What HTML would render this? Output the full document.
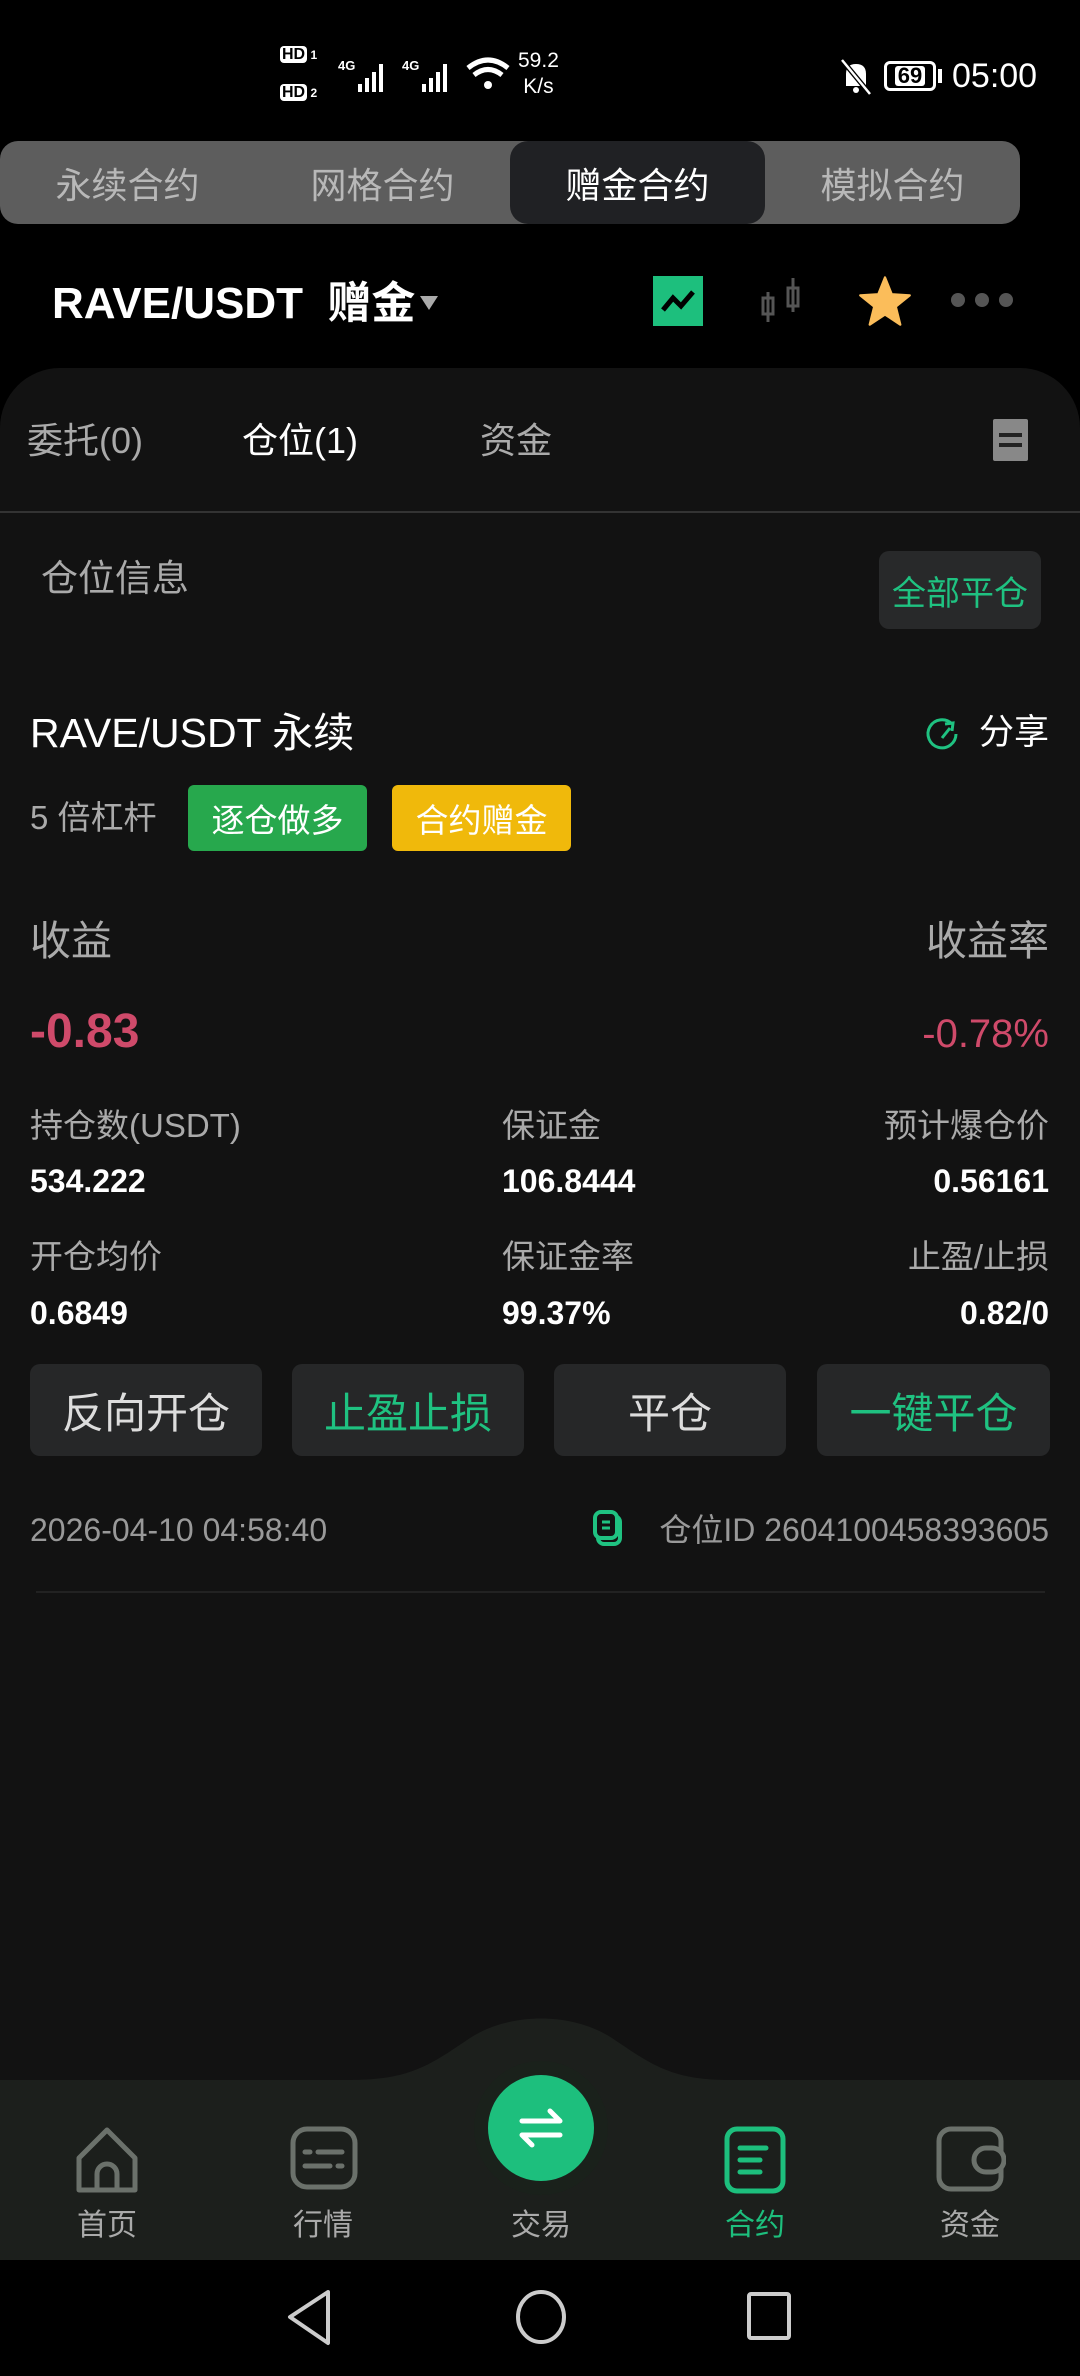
<!DOCTYPE html>
<html><head><meta charset="utf-8">
<style>
*{margin:0;padding:0;box-sizing:border-box}
body{width:1080px;height:2376px;background:#000;position:relative;overflow:hidden;font-family:"Liberation Sans","Noto Sans CJK SC",sans-serif;color:#fff}
.a{position:absolute;white-space:nowrap}
.c{display:flex;align-items:center;justify-content:center}
</style></head><body>
<!-- status bar -->
<div class="a" style="left:280px;top:46px;font-size:16px;font-weight:bold;line-height:18px">
<span style="background:#fff;color:#000;border-radius:4px;padding:0 2px">HD</span><span style="font-size:12px"> 1</span><br><br>
</div>
<div class="a" style="left:280px;top:84px;font-size:16px;font-weight:bold;line-height:18px"><span style="background:#fff;color:#000;border-radius:4px;padding:0 2px">HD</span><span style="font-size:12px"> 2</span></div>
<svg class="a" style="left:338px;top:54px" width="230" height="40" viewBox="0 0 230 40">
<text x="0" y="16" fill="#fff" font-size="13" font-weight="bold" font-family="Liberation Sans">4G</text>
<g fill="#fff"><rect x="20" y="30" width="4" height="8"/><rect x="27" y="24" width="4" height="14"/><rect x="34" y="18" width="4" height="20"/><rect x="41" y="10" width="4" height="28"/></g>
<text x="64" y="16" fill="#fff" font-size="13" font-weight="bold" font-family="Liberation Sans">4G</text>
<g fill="#fff"><rect x="84" y="30" width="4" height="8"/><rect x="91" y="24" width="4" height="14"/><rect x="98" y="18" width="4" height="20"/><rect x="105" y="10" width="4" height="28"/></g>
<path d="M130 14 Q150 -2 170 14" stroke="#fff" stroke-width="5" fill="none"/><path d="M136 21 Q150 10 164 21" stroke="#fff" stroke-width="5" fill="none"/><circle cx="150" cy="31" r="4" fill="#fff"/>
</svg>
<div class="a" style="left:518px;top:48px;font-size:21px;line-height:26px;text-align:center">59.2<br>K/s</div>
<svg class="a" style="left:836px;top:56px" width="40" height="40" viewBox="0 0 40 40"><path d="M10 30 V18 Q10 8 20 8 Q30 8 30 18 V30 Z" fill="#fff"/><circle cx="20" cy="34" r="3" fill="#fff"/><line x1="6" y1="4" x2="34" y2="38" stroke="#000" stroke-width="5"/><line x1="6" y1="4" x2="34" y2="38" stroke="#fff" stroke-width="2.5"/></svg>
<div class="a c" style="left:884px;top:61px;width:52px;height:30px;border:3px solid #fff;border-radius:6px;font-size:22px;font-weight:bold"><span style="background:#fff;color:#000;padding:0 3px;border-radius:3px;line-height:20px">69</span></div>
<div class="a" style="left:938px;top:69px;width:4px;height:14px;background:#fff"></div>
<div class="a" style="left:952px;top:56px;font-size:34px;line-height:40px">05:00</div>

<!-- segment tabs -->
<div class="a" style="left:0;top:141px;width:1020px;height:83px;background:#5d5d5d;border-radius:18px"></div>
<div class="a" style="left:510px;top:141px;width:255px;height:83px;background:#202124;border-radius:18px"></div>
<div class="a c" style="left:0;top:141px;width:255px;height:83px;font-size:36px;color:#b8b8b8">永续合约</div>
<div class="a c" style="left:255px;top:141px;width:255px;height:83px;font-size:36px;color:#b8b8b8">网格合约</div>
<div class="a c" style="left:510px;top:141px;width:255px;height:83px;font-size:36px;color:#fff">赠金合约</div>
<div class="a c" style="left:765px;top:141px;width:255px;height:83px;font-size:36px;color:#b8b8b8">模拟合约</div>

<!-- header -->
<div class="a" style="left:52px;top:276px;font-size:44px;font-weight:bold;line-height:56px">RAVE/USDT&nbsp; 赠金</div>
<div class="a" style="left:420px;top:296px;width:0;height:0;border-left:9px solid transparent;border-right:9px solid transparent;border-top:14px solid #aaa"></div>
<div class="a" style="left:653px;top:276px;width:50px;height:50px;background:#1dbf7d"></div>
<svg class="a" style="left:653px;top:276px" width="50" height="50"><path d="M10 34 L20 22 L28 30 L40 16" stroke="#000" stroke-width="5" fill="none"/></svg>
<svg class="a" style="left:758px;top:276px" width="50" height="50"><g stroke="#555" stroke-width="3" fill="none"><rect x="5" y="22" width="10" height="16"/><line x1="10" y1="16" x2="10" y2="46"/><rect x="30" y="12" width="10" height="18"/><line x1="35" y1="2" x2="35" y2="36"/></g></svg>
<svg class="a" style="left:858px;top:274px" width="54" height="54" viewBox="0 0 24 24"><path d="M12 1.5 L15 9 L23 9.5 L16.8 14.5 L18.8 22.5 L12 18 L5.2 22.5 L7.2 14.5 L1 9.5 L9 9 Z" fill="#fbbd5a" stroke="#fbbd5a" stroke-width="1" stroke-linejoin="round"/></svg>
<div class="a" style="left:951px;top:293px;width:14px;height:14px;border-radius:50%;background:#555;box-shadow:24px 0 0 #555,48px 0 0 #555"></div>

<!-- panel -->
<div class="a" style="left:0;top:368px;width:1080px;height:1760px;background:#121212;border-radius:60px 60px 0 0"></div>
<div class="a" style="left:27px;top:417px;font-size:36px;line-height:48px;color:#aaa">委托(0)</div>
<div class="a" style="left:242px;top:417px;font-size:36px;line-height:48px;color:#fff">仓位(1)</div>
<div class="a" style="left:480px;top:417px;font-size:36px;line-height:48px;color:#aaa">资金</div>
<div class="a" style="left:993px;top:419px;width:35px;height:42px;background:#888;border-radius:2px"></div>
<div class="a" style="left:999px;top:433px;width:23px;height:4px;background:#222;box-shadow:0 10px 0 #222"></div>
<div class="a" style="left:0;top:511px;width:1080px;height:2px;background:#333"></div>

<div class="a" style="left:41px;top:554px;font-size:37px;line-height:50px;color:#aaa">仓位信息</div>
<div class="a c" style="left:879px;top:551px;width:162px;height:78px;background:#28292a;border-radius:10px;font-size:34px;color:#1fc281">全部平仓</div>

<div class="a" style="left:30px;top:705px;font-size:41px;line-height:56px">RAVE/USDT 永续</div>
<svg class="a" style="left:922px;top:714px" width="40" height="40" viewBox="0 0 40 40"><path d="M30 10 A14 14 0 1 0 34 20" stroke="#1fc281" stroke-width="3" fill="none"/><path d="M23 10 L31 9 L30 17" stroke="#1fc281" stroke-width="3" fill="none"/><path d="M20 24 L28 14" stroke="#1fc281" stroke-width="3"/></svg>
<div class="a" style="left:979px;top:709px;font-size:35px;line-height:48px">分享</div>

<div class="a" style="left:30px;top:795px;font-size:33px;line-height:46px;color:#aaa">5 倍杠杆</div>
<div class="a c" style="left:188px;top:785px;width:179px;height:66px;background:#27a84d;border-radius:6px;font-size:33px">逐仓做多</div>
<div class="a c" style="left:392px;top:785px;width:179px;height:66px;background:#f0b90b;border-radius:6px;font-size:33px">合约赠金</div>

<div class="a" style="left:30px;top:914px;font-size:41px;line-height:54px;color:#aaa">收益</div>
<div class="a" style="right:31px;top:914px;font-size:41px;line-height:54px;color:#aaa">收益率</div>
<div class="a" style="left:30px;top:1002px;font-size:48px;font-weight:bold;line-height:60px;color:#cf4a6a">-0.83</div>
<div class="a" style="right:31px;top:1007px;font-size:40px;line-height:54px;color:#cf4a6a">-0.78%</div>

<div class="a" style="left:30px;top:1103px;font-size:33px;line-height:46px;color:#aaa">持仓数(USDT)</div>
<div class="a" style="left:502px;top:1103px;font-size:33px;line-height:46px;color:#aaa">保证金</div>
<div class="a" style="right:31px;top:1103px;font-size:33px;line-height:46px;color:#aaa">预计爆仓价</div>
<div class="a" style="left:30px;top:1160px;font-size:32px;font-weight:bold;line-height:42px">534.222</div>
<div class="a" style="left:502px;top:1160px;font-size:32px;font-weight:bold;line-height:42px">106.8444</div>
<div class="a" style="right:31px;top:1160px;font-size:32px;font-weight:bold;line-height:42px">0.56161</div>
<div class="a" style="left:30px;top:1234px;font-size:33px;line-height:46px;color:#aaa">开仓均价</div>
<div class="a" style="left:502px;top:1234px;font-size:33px;line-height:46px;color:#aaa">保证金率</div>
<div class="a" style="right:31px;top:1234px;font-size:33px;line-height:46px;color:#aaa">止盈/止损</div>
<div class="a" style="left:30px;top:1292px;font-size:32px;font-weight:bold;line-height:42px">0.6849</div>
<div class="a" style="left:502px;top:1292px;font-size:32px;font-weight:bold;line-height:42px">99.37%</div>
<div class="a" style="right:31px;top:1292px;font-size:32px;font-weight:bold;line-height:42px">0.82/0</div>

<div class="a c" style="left:30px;top:1364px;width:232px;height:92px;background:#262728;border-radius:10px;font-size:42px;color:#ddd">反向开仓</div>
<div class="a c" style="left:292px;top:1364px;width:232px;height:92px;background:#262728;border-radius:10px;font-size:42px;color:#1fc281">止盈止损</div>
<div class="a c" style="left:554px;top:1364px;width:232px;height:92px;background:#262728;border-radius:10px;font-size:42px;color:#ddd">平仓</div>
<div class="a c" style="left:817px;top:1364px;width:233px;height:92px;background:#262728;border-radius:10px;font-size:42px;color:#1fc281">一键平仓</div>

<div class="a" style="left:30px;top:1508px;font-size:32px;line-height:44px;color:#999">2026-04-10 04:58:40</div>
<svg class="a" style="left:592px;top:1510px" width="36" height="40" viewBox="0 0 36 40"><rect x="6" y="6" width="22" height="28" rx="6" stroke="#1fc281" stroke-width="4" fill="none"/><rect x="3" y="2" width="22" height="26" rx="6" stroke="#1fc281" stroke-width="4" fill="#121212"/><line x1="10" y1="12" x2="18" y2="12" stroke="#1fc281" stroke-width="3"/><line x1="10" y1="18" x2="18" y2="18" stroke="#1fc281" stroke-width="3"/></svg>
<div class="a" style="right:31px;top:1508px;font-size:32px;line-height:44px;color:#999">仓位ID 2604100458393605</div>
<div class="a" style="left:36px;top:1591px;width:1009px;height:2px;background:#222"></div>

<!-- bottom nav -->
<svg class="a" style="left:0;top:2010px" width="1080" height="250" viewBox="0 0 1080 250"><path d="M0 70 H350 C410 70 430 55 470 28 C510 2 572 2 612 28 C652 55 672 70 730 70 H1080 V250 H0 Z" fill="#1c1f1c"/></svg>
<div class="a" style="left:474px;top:2061px;width:134px;height:134px;border-radius:50%;background:#1a211b"></div>
<div class="a" style="left:488px;top:2075px;width:106px;height:106px;border-radius:50%;background:#1dbf7d"></div>
<svg class="a" style="left:508px;top:2095px" width="66" height="66" viewBox="0 0 66 66"><path d="M14 26 H52 L42 16" stroke="#fff" stroke-width="5" fill="none" stroke-linecap="round" stroke-linejoin="round"/><path d="M52 40 H14 L24 50" stroke="#fff" stroke-width="5" fill="none" stroke-linecap="round" stroke-linejoin="round"/></svg>
<svg class="a" style="left:74px;top:2126px" width="66" height="70" viewBox="0 0 66 70"><path d="M5 64 V32 L33 4 L61 32 V64 Z" stroke="#6b716b" stroke-width="5" fill="none" stroke-linejoin="round"/><path d="M23 64 V48 A10 10 0 0 1 43 48 V64" stroke="#6b716b" stroke-width="5" fill="none"/></svg>
<svg class="a" style="left:290px;top:2126px" width="68" height="66" viewBox="0 0 68 66"><rect x="3" y="3" width="62" height="58" rx="14" stroke="#6b716b" stroke-width="5" fill="none"/><g stroke="#6b716b" stroke-width="5" stroke-linecap="round"><line x1="15" y1="26" x2="20" y2="26"/><line x1="28" y1="26" x2="52" y2="26"/><line x1="15" y1="40" x2="40" y2="40"/><line x1="48" y1="40" x2="52" y2="40"/></g></svg>
<svg class="a" style="left:724px;top:2126px" width="62" height="68" viewBox="0 0 62 68"><rect x="3" y="3" width="56" height="62" rx="10" stroke="#1dbf7d" stroke-width="5" fill="none"/><g stroke="#1dbf7d" stroke-width="5" stroke-linecap="round"><line x1="16" y1="22" x2="42" y2="22"/><line x1="16" y1="34" x2="36" y2="34"/><line x1="16" y1="46" x2="36" y2="46"/></g></svg>
<svg class="a" style="left:936px;top:2126px" width="70" height="66" viewBox="0 0 70 66"><rect x="3" y="3" width="62" height="60" rx="12" stroke="#6b716b" stroke-width="5" fill="none"/><rect x="38" y="22" width="30" height="24" rx="12" stroke="#6b716b" stroke-width="5" fill="#1c1f1c"/></svg>
<div class="a c" style="left:57px;top:2200px;width:100px;height:44px;font-size:30px;color:#aaa">首页</div>
<div class="a c" style="left:273px;top:2200px;width:100px;height:44px;font-size:30px;color:#aaa">行情</div>
<div class="a c" style="left:491px;top:2200px;width:100px;height:44px;font-size:30px;color:#aaa">交易</div>
<div class="a c" style="left:705px;top:2200px;width:100px;height:44px;font-size:30px;color:#1dbf7d">合约</div>
<div class="a c" style="left:920px;top:2200px;width:100px;height:44px;font-size:30px;color:#aaa">资金</div>

<!-- system nav -->
<svg class="a" style="left:0;top:2257px" width="1080" height="119"><path d="M328 35 L290 60 L328 86 Z" stroke="#ccc" stroke-width="4" fill="none" stroke-linejoin="round"/><ellipse cx="541" cy="60" rx="23" ry="25" stroke="#ccc" stroke-width="4" fill="none"/><rect x="749" y="37" width="40" height="44" rx="2" stroke="#ccc" stroke-width="4" fill="none"/></svg>
</body></html>
